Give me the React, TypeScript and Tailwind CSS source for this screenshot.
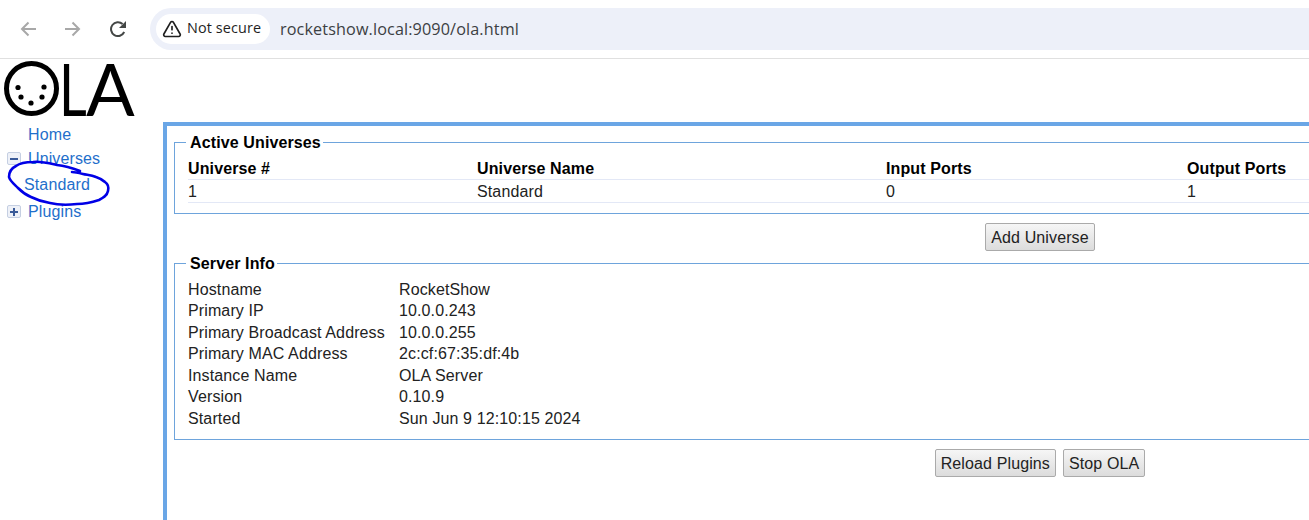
import { TriangleAlert } from 'lucide-react';

const serverInfo = [
  ['Hostname', 'RocketShow'],
  ['Primary IP', '10.0.0.243'],
  ['Primary Broadcast Address', '10.0.0.255'],
  ['Primary MAC Address', '2c:cf:67:35:df:4b'],
  ['Instance Name', 'OLA Server'],
  ['Version', '0.10.9'],
  ['Started', 'Sun Jun 9 12:10:15 2024'],
];

const OlaButton = ({ label }: { label: string }) => (
  <button className="h-[28px] px-[5px] pt-[1px] border border-[#aaaaaa] rounded-[2px] bg-gradient-to-b from-[#f6f6f6] to-[#dcdcdc] text-[16px] text-[#222222]">
    {label}
  </button>
);

const BrowserBar = () => (
  <div className="h-[59px] flex items-center border-b border-[#e0e0e0] bg-white">
    <div className="w-[150px] flex items-center pl-[20px]">
      <svg width="16" height="16" viewBox="0 0 16 16" fill="none" stroke="#a8a8a8" strokeWidth="2">
        <path d="M16 8H2M8.5 1.5L2 8l6.5 6.5" />
      </svg>
      <svg className="ml-[29px]" width="16" height="16" viewBox="0 0 16 16" fill="none" stroke="#a8a8a8" strokeWidth="2">
        <path d="M0 8h14M7.5 1.5L14 8l-6.5 6.5" />
      </svg>
      <svg className="ml-[29px]" width="16" height="16" viewBox="0 0 16 16" fill="none">
        <path d="M14.2 11A6.9 6.9 0 1 1 12.6 3" stroke="#444746" strokeWidth="2" />
        <path d="M16 0V7H9Z" fill="#444746" />
      </svg>
    </div>
    <div className="flex-1 h-[42px] flex items-center rounded-l-full bg-[#edf0f9] pl-[6px]">
      <div className="w-[114px] h-[30px] flex items-center gap-[5px] pl-[6px] rounded-full bg-white font-['Open_Sans',sans-serif] text-[14.4px] text-[#1f1f1f]">
        <TriangleAlert className="w-[20px] h-[20px]" strokeWidth={2} />
        <span className="-mt-[2px]">Not secure</span>
      </div>
      <span className="ml-[10px] font-['Open_Sans',sans-serif] text-[16.2px] text-[#3c4043]">rocketshow.local:9090/ola.html</span>
    </div>
  </div>
);

const Logo = () => (
  <div className="h-[63px] flex items-start pl-[4px] pt-[2px]">
    <svg width="55" height="55" viewBox="0 0 55 55" className="shrink-0">
      <circle cx="27.5" cy="27.5" r="25" fill="none" stroke="#000" strokeWidth="5" />
      <circle cx="14" cy="26.5" r="2.6" />
      <circle cx="40" cy="26" r="2.6" />
      <circle cx="17" cy="36" r="2.6" />
      <circle cx="38" cy="36" r="2.6" />
      <circle cx="27" cy="42" r="2.6" />
    </svg>
    <div className="h-[54px] flex font-['Lato',sans-serif] text-[72px] leading-[54px] text-black">
      <span className="w-[27px] origin-left scale-x-[0.75]">L</span>
      <span>A</span>
    </div>
  </div>
);

const TreeToggle = ({ open }: { open: boolean }) => (
  <span className="w-[14px] h-[13px] flex items-center justify-center border border-[#c5cfe2] rounded-[2px] bg-[#eef1f8] text-[#3a5a98]">
    <svg width="8" height="8" viewBox="0 0 8 8">
      <rect x="0" y="3" width="8" height="2" fill="currentColor" />
      {!open && <rect x="3" y="0" width="2" height="8" fill="currentColor" />}
    </svg>
  </span>
);

const Sidebar = () => (
  <div className="relative w-[163px] shrink-0 pt-[1px] text-[16px] text-[#1f6fcb]">
    <div className="h-[23px] flex items-center pl-[28px]">Home</div>
    <div className="h-[25px] flex items-center pl-[7px] gap-[7px]">
      <TreeToggle open />
      <span>Universes</span>
    </div>
    <div className="h-[27px] flex items-center pl-[24px]">Standard</div>
    <div className="h-[27px] flex items-center pl-[7px] gap-[7px]">
      <TreeToggle open={false} />
      <span>Plugins</span>
    </div>
    <svg className="absolute left-0 top-[-122px] pointer-events-none" width="163" height="240" viewBox="0 0 163 240" fill="none">
      <path
        d="M80 171 C72 168 66 166 57 165 C48 163 40 161 33 162 C25 162 20 163 16 166 C12 168 9 172 9 177 C10 181 14 184 18 188 C22 192 26 195 31 197 C37 200 43 202 50 203 C58 205 68 205 77 204 C85 204 93 202 99 200 C103 198 107 196 108 191 C109 187 108 184 105 182 C102 179 99 178 96 177 C91 175 87 175 83 174 C79 173 75 172 72 172"
        stroke="#0000e6"
        strokeWidth="2.6"
        strokeLinecap="round"
      />
    </svg>
  </div>
);

const App = () => (
  <div className="w-[1309px] h-[520px] overflow-hidden bg-white font-['Liberation_Sans',Arial,sans-serif] text-black tracking-[0.12px]">
    <BrowserBar />
    <Logo />
    <div className="flex">
      <Sidebar />
      <div className="flex-1 h-[398px] border-t-4 border-l-4 border-[#6aa6e6] pt-[6px] pl-[7px]">
        <div className="w-[1732px]">
          <fieldset className="h-[82px] border border-[#6ea4dc] px-[13px]">
            <legend className="ml-[-2px] pl-[4px] pr-[2px] pt-[2px] text-[16px] font-bold leading-[18px]">Active Universes</legend>
            <table className="w-full table-fixed text-[16px] leading-[18px] mt-[4px]">
              <thead>
                <tr className="h-[23px] border-b border-[#e3e8f6] font-bold text-left">
                  <th className="w-[289px] pt-[4px] font-bold">Universe #</th>
                  <th className="w-[409px] pt-[4px] font-bold">Universe Name</th>
                  <th className="w-[301px] pt-[4px] font-bold">Input Ports</th>
                  <th className="pt-[4px] font-bold">Output Ports</th>
                </tr>
              </thead>
              <tbody>
                <tr className="h-[23px] border-b border-[#e3e8f6] text-[#222222]">
                  <td className="pt-[2px]">1</td>
                  <td className="pt-[2px]">Standard</td>
                  <td className="pt-[2px]">0</td>
                  <td className="pt-[2px]">1</td>
                </tr>
              </tbody>
            </table>
          </fieldset>
          <div className="h-[28px] mt-[9px] flex justify-center">
            <OlaButton label="Add Universe" />
          </div>
          <fieldset className="h-[187px] mt-[2px] border border-[#6ea4dc] px-[13px]">
            <legend className="ml-[-2px] pl-[4px] pr-[2px] pt-[2px] text-[16px] font-bold leading-[18px]">Server Info</legend>
            <div className="pt-[6px] text-[16px] text-[#222222]">
              {serverInfo.map(([name, value]) => (
                <div key={name} className="h-[21.5px] flex items-center">
                  <span className="w-[211px]">{name}</span>
                  <span>{value}</span>
                </div>
              ))}
            </div>
          </fieldset>
          <div className="h-[28px] mt-[9px] flex justify-center gap-[7px]">
            <OlaButton label="Reload Plugins" />
            <OlaButton label="Stop OLA" />
          </div>
        </div>
      </div>
    </div>
  </div>
);

export default App;
